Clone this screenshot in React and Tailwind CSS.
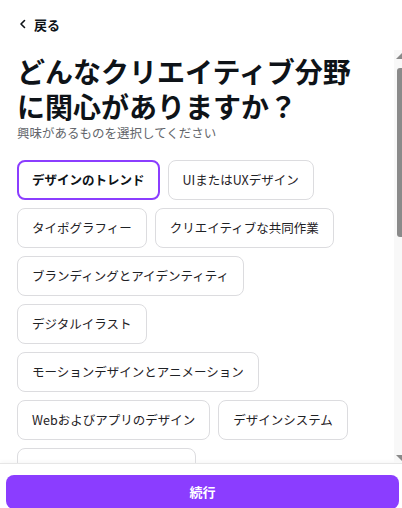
import React from "react";

const items = [
  "デザインのトレンド",
  "UIまたはUXデザイン",
  "タイポグラフィー",
  "クリエイティブな共同作業",
  "ブランディングとアイデンティティ",
  "デジタルイラスト",
  "モーションデザインとアニメーション",
  "Webおよびアプリのデザイン",
  "デザインシステム",
];

export default function App() {
  return (
    <div
      className="relative flex h-[508px] w-[402px] flex-col overflow-hidden bg-white text-[#0e1318]"
      style={{ fontFamily: '"Noto Sans CJK JP", "Noto Sans", sans-serif' }}
    >
      <div className="flex h-[50px] shrink-0 items-center gap-[6px] pl-[18px] pb-[2px]">
        <svg width="10" height="10" viewBox="0 0 10 10" fill="none">
          <path d="M6.5 1.5 L3 5 L6.5 8.5" stroke="#0e1318" strokeWidth="1.6" strokeLinecap="round" strokeLinejoin="round" />
        </svg>
        <span className="text-[13px] font-semibold leading-none">戻る</span>
      </div>

      <div className="relative h-[413px] shrink-0 overflow-hidden">
        <div className="w-[394px] px-[17px] pt-[4px]">
          <h1 className="text-[28px] font-bold leading-[35px]">
            どんなクリエイティブ分野
            <br />
            に関心がありますか？
          </h1>
          <p className="text-[12.5px] leading-[18px] text-[#63666b]">興味があるものを選択してください</p>
          <div className="mt-[18px] flex flex-wrap gap-[8px]">
            {items.map((t, i) =>
              i === 0 ? (
                <div
                  key={t}
                  className="flex h-[40px] items-center rounded-[8px] border-2 border-[#8b3dff] px-[13px] text-[12.5px] font-bold"
                >
                  {t}
                </div>
              ) : (
                <div
                  key={t}
                  className="flex h-[40px] items-center rounded-[8px] border border-[#dcdcdf] px-[14px] text-[12.5px] text-[#1f2226]"
                >
                  {t}
                </div>
              )
            )}
            <div className="h-[40px] w-[179px] rounded-[8px] border border-[#dcdcdf]" />
          </div>
        </div>

        <div className="absolute right-0 top-0 h-full w-[8px] bg-[#f8f8f8]">
          <svg className="absolute left-[2px] top-[3px]" width="6" height="6" viewBox="0 0 6 6">
            <path d="M6 0 L6 6 L0 6 Z" fill="#8a8a8a" />
          </svg>
          <div className="absolute left-[3px] top-[18px] h-[169px] w-[6px] rounded-l-[3px] bg-[#8a8a8a]" />
          <svg className="absolute bottom-[2px] left-[2px]" width="6" height="6" viewBox="0 0 6 6">
            <path d="M0 0 L6 0 L6 6 Z" fill="#8a8a8a" />
          </svg>
        </div>
      </div>

      <div className="shrink-0 border-t border-[#e6e6e6] bg-white px-[6px] pt-[11px] shadow-[0_-2px_4px_rgba(0,0,0,0.03)]">
        <button className="flex h-[34px] w-[393px] items-center justify-center rounded-[8px] bg-[#8b3dff] text-[13px] font-bold text-white">
          続行
        </button>
      </div>
    </div>
  );
}
